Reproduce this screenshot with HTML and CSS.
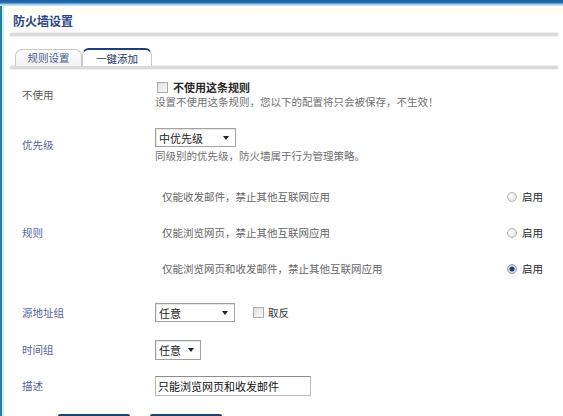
FILE: index.html
```html
<!DOCTYPE html>
<html lang="zh-CN">
<head>
    <meta charset="UTF-8">
    <meta name="viewport" content="width=device-width, initial-scale=1.0">
    <title>防火墙设置</title>
    <link rel="stylesheet" href="styles.css">
</head>
<body>
    <div class="topbar"></div>
    <div class="panel">
        <h1 class="title">防火墙设置</h1>
        <div class="divider"></div>

        <div class="tabs">
            <span class="tab">规则设置</span>
            <span class="tab active">一键添加</span>
        </div>
        <div class="divider tab-line"></div>

        <div class="form">
            <div class="row row-disable">
                <div class="label dark">不使用</div>
                <div class="field">
                    <div class="check-line">
                        <span class="checkbox"></span>
                        <b>不使用这条规则</b>
                    </div>
                    <p class="hint">设置不使用这条规则，您以下的配置将只会被保存，不生效！</p>
                </div>
            </div>

            <div class="row row-priority">
                <div class="label">优先级</div>
                <div class="field">
                    <div class="select select-mid">
                        <span>中优先级</span>
                        <span class="caret"></span>
                    </div>
                    <p class="hint">同级别的优先级，防火墙属于行为管理策略。</p>
                </div>
            </div>

            <div class="row row-rules">
                <div class="label">规则</div>
                <div class="field">
                    <div class="rule-line">
                        <span class="rule-text">仅能收发邮件，禁止其他互联网应用</span>
                        <span class="enable"><span class="radio"></span>启用</span>
                    </div>
                    <div class="rule-line">
                        <span class="rule-text">仅能浏览网页，禁止其他互联网应用</span>
                        <span class="enable"><span class="radio"></span>启用</span>
                    </div>
                    <div class="rule-line">
                        <span class="rule-text">仅能浏览网页和收发邮件，禁止其他互联网应用</span>
                        <span class="enable"><span class="radio checked"></span>启用</span>
                    </div>
                </div>
            </div>

            <div class="row row-source">
                <div class="label">源地址组</div>
                <div class="field inline">
                    <div class="select select-wide">
                        <span>任意</span>
                        <span class="caret"></span>
                    </div>
                    <span class="checkbox invert-box"></span>
                    <span class="invert-text">取反</span>
                </div>
            </div>

            <div class="row row-time">
                <div class="label">时间组</div>
                <div class="field">
                    <div class="select select-small">
                        <span>任意</span>
                        <span class="caret"></span>
                    </div>
                </div>
            </div>

            <div class="row row-desc">
                <div class="label">描述</div>
                <div class="field">
                    <div class="text-input">只能浏览网页和收发邮件</div>
                </div>
            </div>

            <div class="buttons">
                <span class="btn"></span>
                <span class="btn"></span>
            </div>
        </div>
    </div>
</body>
</html>
```
FILE: styles.css
```css
:root {
    --label-color: #5664a0;
    --hint-color: #707070;
    --line-color: #dadada;
    --navy: #1f3f78;
}

* {
    margin: 0;
    padding: 0;
    box-sizing: border-box;
}

html, body {
    height: 100%;
    overflow: hidden;
}

body {
    font-family: "Noto Sans CJK SC", "Liberation Sans", sans-serif;
    font-size: 10.5px;
    line-height: 12px;
    background-color: white;
    color: #333;
}

.topbar {
    height: 6px;
    background: linear-gradient(to bottom, #1a5b9c 0, #2a74b4 3px, #8fc6ec 4px, #d6ecfa 6px);
}

.panel {
    height: 410px;
    border-left: 2px solid #2b7e97;
    box-shadow: inset 2px 0 0 #c9eef5;
    background: linear-gradient(to bottom, #fffef2 0, #ffffff 12px);
    padding: 9px 8px 0 11px;
}

.title {
    font-size: 12px;
    line-height: 12px;
    font-weight: bold;
    color: #2a4684;
}

.divider {
    height: 3px;
    margin: 6px -3px 0;
    background-color: var(--line-color);
    border-radius: 2px;
    box-shadow: 0 0 0 1px #f1f1f1;
}

/* Tabs */
.tabs {
    display: flex;
    align-items: flex-end;
    height: 18px;
    margin-top: 12px;
    padding-left: 2px;
}

.tab {
    width: 67px;
    height: 17px;
    text-align: center;
    line-height: 16px;
    color: #4a5a90;
    border: 1px solid #c9c9c9;
    border-bottom: none;
    border-radius: 7px 7px 0 0;
    background: linear-gradient(to bottom, #ffffff, #f1f1f1);
}

.tab.active {
    width: 70px;
    height: 18px;
    line-height: 17px;
    color: #25366c;
    border-top: 2px solid var(--navy);
    background: white;
}

.tab-line {
    margin-top: 0;
}

/* Form */
.form {
    padding-left: 9px;
}

.row {
    display: flex;
    align-items: center;
}

.label {
    width: 133px;
    flex-shrink: 0;
    color: var(--label-color);
}

.label.dark {
    color: #5a5a5a;
}

.field.inline {
    display: flex;
    align-items: center;
}

.row-disable {
    margin-top: 12px;
}

.check-line {
    display: flex;
    align-items: center;
    height: 12px;
    padding-left: 2px;
}

.check-line b {
    font-size: 11px;
    font-weight: 600;
    color: #2a2a2a;
    margin-left: 5px;
}

.checkbox {
    display: inline-block;
    width: 11px;
    height: 11px;
    border: 1px solid #adadad;
    background: linear-gradient(135deg, #e0e0e0, #f8f8f8);
}

.hint {
    margin-top: 3px;
    color: var(--hint-color);
}

.row-priority {
    margin-top: 20px;
}

.select {
    display: flex;
    align-items: center;
    justify-content: space-between;
    height: 19px;
    padding: 0 6px 0 3px;
    border: 1px solid #a2a2a2;
    box-shadow: inset 1px 1px 0 #e6e6e6;
    background-color: white;
    color: #1a1a1a;
    font-size: 11px;
}

.caret {
    width: 0;
    height: 0;
    border-left: 3px solid transparent;
    border-right: 3px solid transparent;
    border-top: 4px solid #222;
}

.select-mid {
    width: 81px;
}

.select-wide {
    width: 80px;
}

.select-small {
    width: 46px;
    height: 20px;
}

/* Rules */
.row-rules {
    margin-top: 17px;
}

.rule-line {
    display: flex;
    align-items: center;
    justify-content: space-between;
    width: 390px;
    height: 36px;
    padding-left: 7px;
}

.rule-text {
    color: #666;
}

.enable {
    display: flex;
    align-items: center;
    color: #2a2a2a;
    width: 38px;
}

.radio {
    width: 10px;
    height: 10px;
    margin-right: 5px;
    border-radius: 50%;
    border: 1px solid #b8b8b8;
    background: radial-gradient(circle at 40% 40%, #ffffff, #d6d6d6);
}

.radio.checked {
    border-color: #8a9ab8;
    background: radial-gradient(circle, #1e3b6e 0, #1e3b6e 2px, #d9e3f2 3px, #b8c6dc 5px);
}

.row-source {
    margin-top: 16px;
}

.invert-box {
    margin-left: 18px;
}

.invert-text {
    margin-left: 4px;
    color: #333;
}

.row-time {
    margin-top: 18px;
}

.row-desc {
    margin-top: 16px;
}

.text-input {
    width: 156px;
    height: 20px;
    padding-left: 2px;
    line-height: 18px;
    font-size: 11px;
    color: #111;
    border: 1px solid #b9b9b9;
    border-top-color: #8e8e8e;
}

/* Buttons: only their top edge shows at the bottom of the window */
.buttons {
    display: flex;
    gap: 20px;
    margin-top: 18px;
    padding-left: 36px;
}

.btn {
    width: 72px;
    height: 2px;
    background-color: #1d4470;
    border-radius: 2px 2px 0 0;
}
```
